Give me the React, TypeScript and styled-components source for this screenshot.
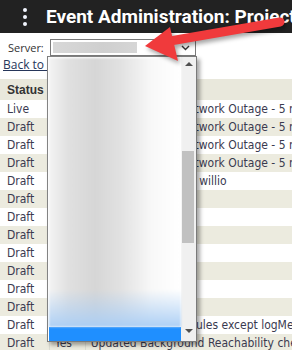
import React from 'react';
import styled, { createGlobalStyle } from 'styled-components';

const GlobalStyle = createGlobalStyle`
  html, body {
    margin: 0;
    padding: 0;
    background: #ffffff;
    overflow: hidden;
  }
  body {
    font-family: "DejaVu Sans Condensed", "DejaVu Sans", sans-serif;
  }
`;

const Page = styled.div`
  position: relative;
  width: 292px;
  height: 350px;
  overflow: hidden;
  background: #fff;
`;

const TopBar = styled.header`
  display: flex;
  align-items: center;
  height: 33px;
  background: #222222;
  padding-left: 23px;
  gap: 19px;
  white-space: nowrap;
`;

const Kebab = styled.div`
  display: flex;
  flex-direction: column;
  gap: 3px;
  width: 6px;
  align-items: center;
`;

const Dot = styled.span`
  width: 4px;
  height: 4px;
  border-radius: 50%;
  background: #f2f6ff;
`;

const Title = styled.h1`
  margin: 0;
  font-family: Roboto, "Liberation Sans", sans-serif;
  font-weight: 700;
  font-size: 19px;
  color: #ffffff;
`;

const Body = styled.div`
  display: flex;
  flex-direction: column;
  padding-top: 6px;
  font-size: 12px;
  color: #333;
`;

const ServerRow = styled.div`
  display: flex;
  align-items: center;
  gap: 6px;
  padding-left: 8px;
  height: 17px;
`;

const Label = styled.span`
  font-family: "Open Sans", "DejaVu Sans", sans-serif;
  font-size: 11px;
  color: #333;
`;

const SelectBox = styled.div`
  box-sizing: border-box;
  width: 146px;
  height: 17px;
  border: 1px solid #7a7a7a;
  background: #fff;
  display: flex;
  align-items: center;
  justify-content: space-between;
  padding: 0 5px 0 2px;
`;

const SelectValue = styled.div`
  width: 84px;
  height: 11px;
  background: linear-gradient(90deg, #d8d8d8, #cfcfcf 60%, #d6d6d6);
  filter: blur(0.6px);
`;

const Chevron = styled.svg`
  display: block;
`;

const BackLink = styled.a`
  display: block;
  margin: 0 0 0 3px;
  height: 16px;
  font-family: "Open Sans", "DejaVu Sans", sans-serif;
  font-size: 12px;
  color: #26365a;
  text-decoration: underline;
`;

const Grid = styled.table`
  margin-top: 7px;
  border-collapse: collapse;
  white-space: nowrap;
  font-family: "DejaVu Sans Condensed", "DejaVu Sans", sans-serif;
  font-size: 12px;
  color: #3a3a50;
`;

const HeadCell = styled.th`
  height: 21px;
  padding: 0 5px;
  text-align: left;
  background: #e9e8dc;
  font-family: "Liberation Sans", Arial, sans-serif;
  font-weight: 700;
  color: #333;
  border-right: 1px solid #d6d6cc;
  &:first-child {
    padding-left: 7px;
  }
`;

const Row = styled.tr<{ $alt: boolean }>`
  background: ${p => (p.$alt ? '#ecebdf' : '#ffffff')};
`;

const Cell = styled.td<{ $w?: number }>`
  height: 18px;
  padding: 0 5px;
  ${p => (p.$w ? `width: ${p.$w}px; min-width: ${p.$w}px;` : '')}
  border-right: 1px solid #dcdcd2;
  &:first-child {
    padding-left: 7px;
  }
`;

const Dropdown = styled.div`
  position: absolute;
  left: 47px;
  top: 56px;
  width: 148px;
  height: 284px;
  border: 1px solid #7a7a7a;
  background: #fff;
  box-shadow: 3px 3px 4px rgba(0, 0, 0, 0.35);
  display: flex;
`;

const Options = styled.div`
  flex: 1;
  display: flex;
  flex-direction: column;
  justify-content: flex-end;
  padding: 1px 0 0 1px;
`;

const Blurred = styled.div`
  flex: 1;
  background:
    linear-gradient(180deg, rgba(255,255,255,0) 0%, rgba(255,255,255,0) 86%, rgba(170,206,245,0.95) 100%),
    linear-gradient(90deg, #f4f4f4 0%, #e0e0e0 15%, #d6d6d6 35%, #e2e2e2 55%, #f8f8f8 78%, #ffffff 100%);
  filter: blur(1px);
`;

const Selected = styled.div`
  height: 14px;
  background: #1f8fff;
`;

const ScrollTrack = styled.div`
  width: 15px;
  background: #f0f0f0;
  display: flex;
  flex-direction: column;
  align-items: center;
  justify-content: space-between;
  padding: 5px 0 8px;
`;

const ScrollArrow = styled.div<{ $down?: boolean }>`
  width: 0;
  height: 0;
  border-left: 4px solid transparent;
  border-right: 4px solid transparent;
  ${p => (p.$down ? 'border-top: 4px solid #505050;' : 'border-bottom: 4px solid #505050;')}
`;

const Thumb = styled.div`
  position: absolute;
  right: 2px;
  top: 94px;
  width: 12px;
  height: 92px;
  background: #c1c1c1;
`;

const Arrow = styled.svg`
  position: absolute;
  left: 0;
  top: 0;
  pointer-events: none;
  filter: drop-shadow(2px 3px 2px rgba(0, 0, 0, 0.35));
`;

const rows: [string, string, string][] = [
  ['Live', 'No', 'Planned Weekly Network Outage - 5 minutes'],
  ['Draft', 'No', 'Planned Weekly Network Outage - 5 minutes'],
  ['Draft', 'No', 'Planned Weekly Network Outage - 5 minutes'],
  ['Draft', 'No', 'Planned Weekly Network Outage - 5 minutes'],
  ['Draft', 'No', 'Test notifications to willio'],
  ['Draft', 'No', ''],
  ['Draft', 'No', ''],
  ['Draft', 'No', ''],
  ['Draft', 'No', ''],
  ['Draft', 'No', ''],
  ['Draft', 'No', ''],
  ['Draft', 'No', ''],
  ['Draft', 'No', 'Disabled all alarm rules except logMessage'],
  ['Draft', 'Yes', 'Updated Background Reachability check event'],
];

export default function App() {
  return (
    <Page>
      <GlobalStyle />
      <TopBar>
        <Kebab>
          <Dot />
          <Dot />
          <Dot />
        </Kebab>
        <Title>Event Administration: Project Events</Title>
      </TopBar>
      <Body>
        <ServerRow>
          <Label>Server:</Label>
          <SelectBox>
            <SelectValue />
            <Chevron width="9" height="6" viewBox="0 0 9 6">
              <path d="M1 1l3.5 3.5L8 1" fill="none" stroke="#333" strokeWidth="1.4" />
            </Chevron>
          </SelectBox>
        </ServerRow>
        <BackLink href="#">Back to projects</BackLink>
        <Grid>
          <thead>
            <tr>
              <HeadCell>Status</HeadCell>
              <HeadCell>On</HeadCell>
              <HeadCell>Description</HeadCell>
            </tr>
          </thead>
          <tbody>
            {rows.map((r, i) => (
              <Row key={i} $alt={i % 2 === 1}>
                <Cell $w={36}>{r[0]}</Cell>
                <Cell $w={25}>{r[1]}</Cell>
                <Cell>{r[2]}</Cell>
              </Row>
            ))}
          </tbody>
        </Grid>
      </Body>
      <Dropdown>
        <Options>
          <Blurred />
          <Selected />
        </Options>
        <ScrollTrack>
          <ScrollArrow />
          <ScrollArrow $down />
        </ScrollTrack>
        <Thumb />
      </Dropdown>
      <Arrow width="292" height="350" viewBox="0 0 292 350">
        <line x1="280" y1="22" x2="170" y2="41" stroke="#f03a3c" strokeWidth="9" strokeLinecap="round" />
        <polygon points="145,46 170,27 178,61" fill="#f03a3c" />
      </Arrow>
    </Page>
  );
}
